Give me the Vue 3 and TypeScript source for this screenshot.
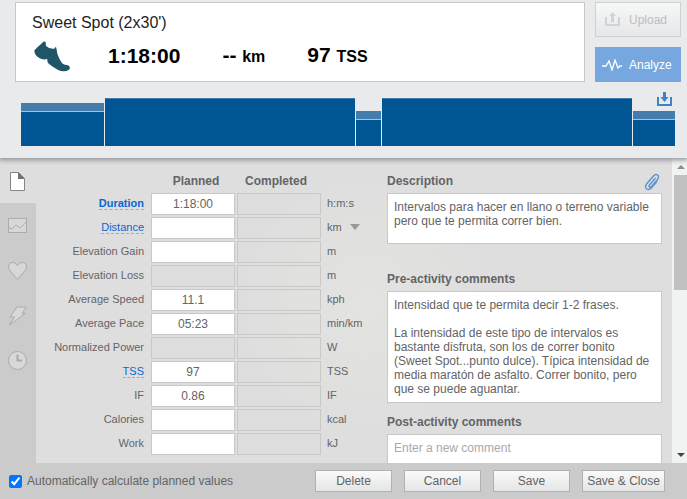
<script setup lang="ts">
import { ref } from 'vue'

interface Block {
  minutes: number
  height: number
  range: number
}

interface Metric {
  id: string
  label: string
  unit: string
  planned: string
  locked?: boolean
  link?: boolean
  strong?: boolean
  units?: string[]
}

const blocks: Block[] = [
  { minutes: 10, height: 43, range: 8 },
  { minutes: 30, height: 48, range: 0 },
  { minutes: 3, height: 35, range: 8 },
  { minutes: 30, height: 48, range: 0 },
  { minutes: 5, height: 35, range: 8 },
]

const metrics = ref<Metric[]>([
  { id: 'duration', label: 'Duration', unit: 'h:m:s', planned: '1:18:00', link: true, strong: true },
  { id: 'distance', label: 'Distance', unit: 'km', planned: '', link: true, units: ['km', 'mi'] },
  { id: 'gain', label: 'Elevation Gain', unit: 'm', planned: '' },
  { id: 'loss', label: 'Elevation Loss', unit: 'm', planned: '', locked: true },
  { id: 'speed', label: 'Average Speed', unit: 'kph', planned: '11.1' },
  { id: 'pace', label: 'Average Pace', unit: 'min/km', planned: '05:23' },
  { id: 'power', label: 'Normalized Power', unit: 'W', planned: '', locked: true },
  { id: 'tss', label: 'TSS', unit: 'TSS', planned: '97', link: true },
  { id: 'if', label: 'IF', unit: 'IF', planned: '0.86' },
  { id: 'calories', label: 'Calories', unit: 'kcal', planned: '' },
  { id: 'work', label: 'Work', unit: 'kJ', planned: '' },
])

const description = ref('Intervalos para hacer en llano o terreno variable pero que te permita correr bien.')
const preComments = ref(
  'Intensidad que te permita decir 1-2 frases.\n\nLa intensidad de este tipo de intervalos es bastante disfruta, son los de correr bonito (Sweet Spot...punto dulce). Típica intensidad de media maratón de asfalto. Correr bonito, pero que se puede aguantar.',
)
const postComment = ref('')
const autoCalculate = ref(true)
const activeTab = ref('summary')
const tabs = ['summary', 'map', 'heart', 'power', 'time']
</script>

<template>
  <div class="workout">
    <header class="top">
      <div class="top-row">
        <section class="card">
          <h1 class="title">Sweet Spot (2x30')</h1>
          <div class="stats">
            <svg class="shoe" viewBox="102 120 111 93" aria-hidden="true">
              <path
                d="M132 121L137 124L138 135Q149 145 163 143L166 138L169 140L172 158Q180 180 188 188Q194 192 204 193Q210 196 210 201Q208 208 199 210Q184 212 173 206Q155 197 144 186Q141 180 142 174Q128 178 118 171Q103 163 103 148Q108 143 113 138Q124 129 132 121Z"
              />
            </svg>
            <span class="stat">1:18:00</span>
            <span class="stat">-- <small>km</small></span>
            <span class="stat">97 <small>TSS</small></span>
          </div>
        </section>
        <div class="actions">
          <button type="button" class="upload" disabled>
            <svg viewBox="0 0 15 15" aria-hidden="true">
              <path d="M1 5V13H14V5" fill="none" stroke="currentColor" stroke-width="2" />
              <path d="M7.500 0L11 4H9V10H6V4H4Z" fill="currentColor" />
            </svg>
            Upload
          </button>
          <button type="button" class="analyze">
            <svg class="pulse" viewBox="0 0 20 12" aria-hidden="true">
              <path
                d="M0 7H4L7 2L10 11L13 1L16 9L18 7H20"
                fill="none"
                stroke="currentColor"
                stroke-width="1.300"
              />
            </svg>
            Analyze
          </button>
        </div>
      </div>
      <div class="chart">
        <div
          v-for="(b, i) in blocks"
          :key="i"
          class="block"
          :style="{ flexGrow: b.minutes, height: b.height + 'px' }"
        >
          <div v-if="b.range" class="range" :style="{ height: b.range + 'px' }"></div>
        </div>
        <button type="button" class="download" aria-label="Export">
          <svg viewBox="0 0 15 14" aria-hidden="true">
            <path d="M1 5V13H14V5" fill="none" stroke="currentColor" stroke-width="2" />
            <path d="M6 0H9V5H11.500L7.500 10L3.500 5H6Z" fill="currentColor" />
          </svg>
        </button>
      </div>
    </header>

    <main class="body">
      <nav class="tabs">
        <button
          v-for="t in tabs"
          :key="t"
          type="button"
          class="tab"
          :class="{ active: t === activeTab }"
          :aria-label="t"
          @click="activeTab = t"
        >
          <svg v-if="t === 'summary'" viewBox="0 0 20 20" aria-hidden="true">
            <path d="M2.500 1.500H10.500L16.500 7.500V19.500H2.500Z" fill="#fff" stroke="#858585" />
            <path d="M10 1V8H17Z" fill="#707174" />
          </svg>
          <svg v-else-if="t === 'map'" viewBox="0 0 20 20" aria-hidden="true">
            <rect x=".5" y="2.500" width="18" height="14" class="ghost" />
            <path d="M.5 11.500L4 13L8 9L12 12L18.500 6" class="ghost line" />
          </svg>
          <svg v-else-if="t === 'heart'" viewBox="0 0 20 20" aria-hidden="true">
            <path
              d="M9.500 18.500Q7 15 4 12Q.5 8.500 .5 6Q.5 1.500 5 1.500Q8 1.500 9.500 4.500Q11 1.500 14 1.500Q18.500 1.500 18.500 6Q18.500 8.500 15 12Q12 15 9.500 18.500Z"
              class="ghost"
            />
          </svg>
          <svg v-else-if="t === 'power'" viewBox="0 0 20 20" aria-hidden="true">
            <path d="M9 1H18.500L14 7.300H17.500L1.500 19L6.300 11H2Z" class="ghost" />
          </svg>
          <svg v-else viewBox="0 0 20 20" aria-hidden="true">
            <circle cx="9.500" cy="9.500" r="9" class="ghost" />
            <path d="M9.500 3.500V9.500H14" fill="none" stroke="#a9a9a9" stroke-width="2" />
          </svg>
        </button>
      </nav>

      <div class="content">
        <table class="metrics">
          <thead>
            <tr>
              <td></td>
              <th scope="col" class="planned">Planned</th>
              <th scope="col" class="completed">Completed</th>
              <td></td>
            </tr>
          </thead>
          <tbody>
            <tr v-for="m in metrics" :key="m.id">
              <th scope="row" class="name">
                <label :for="'planned-' + m.id" :class="{ link: m.link, strong: m.strong }">{{ m.label }}</label>
              </th>
              <td class="cell">
                <input :id="'planned-' + m.id" v-model="m.planned" type="text" :disabled="m.locked" />
              </td>
              <td class="cell">
                <input type="text" disabled :aria-label="m.label + ' completed'" />
              </td>
              <td class="unit">
                <span v-if="m.units" class="unit-pick">
                  <select v-model="m.unit" aria-label="Distance unit">
                    <option v-for="u in m.units" :key="u">{{ u }}</option>
                  </select>
                </span>
                <template v-else>{{ m.unit }}</template>
              </td>
            </tr>
          </tbody>
        </table>

        <section class="notes">
          <div class="note-head">
            <label for="description">Description</label>
            <button type="button" class="attach" aria-label="Attach file">
              <svg viewBox="0 0 16 18" aria-hidden="true">
                <path
                  d="M11.500 5L5.500 12Q4.500 13.500 5.500 14Q6.500 14.500 7.500 13.500L13.500 6.500Q15.500 3.500 13.500 2Q11.500 .5 9.500 3L2.500 11Q.5 14 2.500 15.700Q5 17.500 7.500 14.800L13 8.500"
                />
              </svg>
            </button>
          </div>
          <textarea id="description" v-model="description" class="short"></textarea>
          <label class="note-label" for="pre">Pre-activity comments</label>
          <textarea id="pre" v-model="preComments" class="tall"></textarea>
          <label class="note-label" for="post">Post-activity comments</label>
          <textarea id="post" v-model="postComment" class="short" placeholder="Enter a new comment"></textarea>
        </section>
      </div>

      <div class="scrollbar" aria-hidden="true">
        <span class="arrow up"></span>
        <span class="thumb"></span>
        <span class="arrow down"></span>
      </div>
    </main>

    <footer class="bottom">
      <label class="auto">
        <input v-model="autoCalculate" type="checkbox" />
        Automatically calculate planned values
      </label>
      <div class="buttons">
        <button type="button">Delete</button>
        <button type="button">Cancel</button>
        <button type="button">Save</button>
        <button type="button" class="wide">Save &amp; Close</button>
      </div>
    </footer>
  </div>
</template>

<style>
body {
  margin: 0;
}
</style>

<style scoped>
.workout {
  display: flex;
  flex-direction: column;
  height: 100vh;
  overflow: hidden;
  background: #dedede;
  color: #636466;
  font-family: 'Liberation Sans', Arial, sans-serif;
  font-size: 12px;
}
.workout * {
  box-sizing: border-box;
}
button,
input,
select,
textarea {
  margin: 0;
  font: inherit;
  color: inherit;
}
button {
  padding: 0;
  border: 0;
  background: none;
}
svg {
  display: block;
}

.top {
  position: relative;
  flex: none;
  padding: 2px 6px 12px 15px;
  background: #e9eaec;
  box-shadow: 0 1px 5px 1px #8e9094;
}
.top-row {
  display: flex;
  gap: 10px;
}
.card {
  flex: 1;
  padding: 11px 16px 1px;
  border: 1px solid #c8c9cb;
  background: #fff;
  color: #000;
}
.title {
  margin: 0;
  color: #222;
  font-size: 16px;
  font-weight: 400;
  line-height: 18px;
}
.stats {
  display: flex;
  align-items: center;
  height: 48px;
}
.shoe {
  width: 37px;
  height: 31px;
  margin: 0 37px 0 2px;
  fill: #205567;
}
.stat {
  margin-right: 42px;
  font-size: 21px;
  font-weight: 700;
  line-height: 28px;
}
.stat small {
  font-size: 16px;
}
.actions {
  display: flex;
  flex-direction: column;
  gap: 10px;
}
.actions button {
  display: flex;
  align-items: center;
  width: 86px;
  height: 35px;
}
.actions .upload {
  gap: 9px;
  padding-left: 9px;
  border: 1px solid #cfd0d1;
  background: linear-gradient(#f6f7f7, #e6e7e8);
  color: #bcbdbf;
}
.upload svg {
  width: 15px;
  height: 15px;
  color: #d2d3d4;
}
.actions .analyze {
  gap: 7px;
  padding-left: 7px;
  background: #76a8df;
  color: #fff;
}
.pulse {
  width: 20px;
  height: 12px;
}
.chart {
  position: relative;
  display: flex;
  align-items: flex-end;
  gap: 1px;
  height: 48px;
  margin: 16px 6px 0;
}
.block {
  flex: 1 1 0;
  border-top: 1px solid #3f7dad;
  background: #005695;
}
.range {
  border-bottom: 1px solid #a5c2d8;
  background: #447dab;
}
.download {
  position: absolute;
  top: -6px;
  right: 3px;
  color: #3f82cb;
}
.download svg {
  width: 15px;
  height: 14px;
}

.body {
  display: flex;
  flex: 1;
  min-height: 0;
  overflow: hidden;
}
.tabs {
  flex: none;
  width: 36px;
  background: #cbcbcb;
}
.tab {
  display: flex;
  align-items: center;
  justify-content: center;
  width: 36px;
  height: 45px;
}
.tab.active {
  background: #dedede;
}
.tab svg {
  width: 20px;
  height: 20px;
}
.ghost {
  fill: #d8d8d8;
  stroke: #acacac;
}
.ghost.line {
  fill: none;
}

.content {
  display: flex;
  flex: 1;
  align-items: flex-start;
  gap: 17px;
  min-width: 0;
  padding: 13px 10px 0 11px;
  background: radial-gradient(circle at 52% 48%, #e3e3e0, #dedede 35%);
}
.metrics {
  flex: none;
  border-spacing: 2px;
  font-size: 11px;
}
.metrics td,
.metrics th {
  padding: 0;
}
.metrics thead th {
  height: 18px;
  padding-bottom: 2px;
  font-size: 12px;
}
.metrics thead .planned {
  padding-left: 6px;
}
.metrics thead .completed {
  padding-right: 6px;
}
.metrics .name {
  width: 100px;
  padding: 0 5px 2px 0;
  font-weight: 400;
  text-align: right;
  white-space: nowrap;
}
.name .link {
  border-bottom: 1px dashed #a9abad;
  color: #0a67d3;
}
.name .strong {
  font-weight: 700;
}
.cell input {
  display: block;
  width: 84px;
  height: 22px;
  padding: 0;
  border: 1px solid #c8c8c8;
  border-radius: 0;
  background: #fff;
  font-size: 12px;
  text-align: center;
}
.cell input:disabled {
  background: transparent;
}
.metrics .unit {
  width: 45px;
  padding: 0 0 2px 4px;
  white-space: nowrap;
}
.unit-pick {
  display: flex;
  align-items: center;
  gap: 7px;
}
.unit-pick select {
  width: 16px;
  padding: 0;
  border: 0;
  background: none;
  appearance: none;
}
.unit-pick::after {
  border: 5px solid transparent;
  border-top: 6px solid #97999b;
  border-bottom: 0;
  content: '';
}

.notes {
  display: flex;
  flex: 1;
  flex-direction: column;
  min-width: 0;
}
.note-head,
.note-label {
  font-weight: 700;
  line-height: 20px;
}
.note-head {
  display: flex;
  justify-content: space-between;
  height: 22px;
  padding-right: 2px;
}
.note-label {
  height: 22px;
}
.attach svg {
  width: 16px;
  height: 18px;
  fill: none;
  stroke: #5b94cf;
  stroke-width: 1.4;
}
textarea {
  display: block;
  width: 100%;
  padding: 6px;
  border: 1px solid #c8c8c8;
  border-radius: 0;
  background: #fff;
  line-height: 14px;
  overflow: hidden;
  resize: none;
}
textarea::placeholder {
  color: #a9a9a9;
}
.short {
  height: 51px;
  margin-bottom: 25px;
}
.tall {
  height: 112px;
  margin-bottom: 9px;
}

.scrollbar {
  display: flex;
  flex: none;
  flex-direction: column;
  align-items: center;
  width: 15px;
  padding: 7px 0 6px 2px;
  background: #f1f2f2;
}
.arrow {
  border: 4px solid transparent;
}
.up {
  border-top: 0;
  border-bottom-color: #8c8c8c;
}
.down {
  margin-top: auto;
  border-top-color: #444;
  border-bottom: 0;
}
.thumb {
  width: 100%;
  height: 115px;
  margin-top: 6px;
  background: #c1c1c1;
}

.bottom {
  display: flex;
  flex: none;
  align-items: center;
  justify-content: space-between;
  height: 36px;
  padding: 0 22px 0 9px;
  background: #cbcbcb;
}
.auto {
  display: flex;
  align-items: center;
  gap: 5px;
}
.auto input {
  width: 13px;
  height: 13px;
  accent-color: #0075ff;
}
.buttons {
  display: flex;
  gap: 12px;
}
.buttons button {
  width: 77px;
  height: 22px;
  border: 1px solid #b0b1b2;
  background: linear-gradient(#fafafa, #e4e5e6);
}
.buttons .wide {
  width: 83px;
}
</style>
